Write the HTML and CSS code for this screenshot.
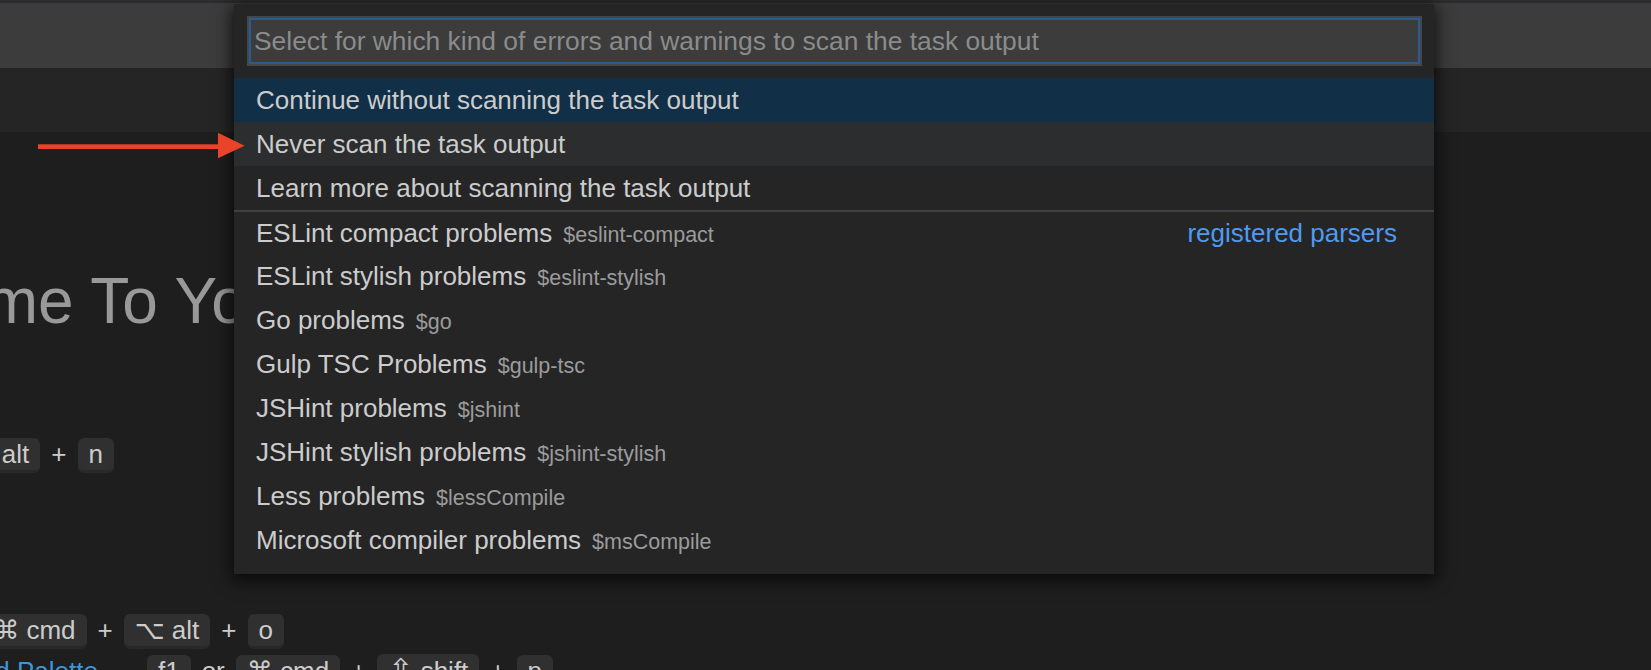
FILE: index.html
```html
<!DOCTYPE html>
<html>
<head>
<meta charset="utf-8">
<title>Quick Pick</title>
<link rel="stylesheet" href="styles.css">
</head>
<body>
<div class="app">
  <div class="topline"></div>
  <div class="titlebar"></div>
  <div class="tabbar"></div>
  <main class="editor">
    <h1 class="welcome">Welcome To Your Project</h1>
    <div class="keys row1">
      <span class="key">⌘ cmd</span><span class="plus">+</span><span class="key">⌥ alt</span><span class="plus">+</span><span class="key">n</span>
    </div>
    <div class="keys row2">
      <span class="key">⌘ cmd</span><span class="plus">+</span><span class="key">⌥ alt</span><span class="plus">+</span><span class="key">o</span>
    </div>
    <div class="keys row3">
      <span class="link">Command Palette</span><span class="key">f1</span><span class="plus">or</span><span class="key">⌘ cmd</span><span class="plus">+</span><span class="key"><span class="glyph">⇧</span> shift</span><span class="plus">+</span><span class="key">p</span>
    </div>
  </main>

  <svg class="arrow" width="207" height="27" viewBox="0 0 207 27">
    <rect x="0" y="12.3" width="184" height="4.7" fill="#e9442a"/>
    <polygon points="180,0.7 206.5,13.8 180,26.3" fill="#e9442a"/>
  </svg>

  <div class="quickpick">
    <div class="qp-input-wrap">
      <div class="qp-input"><span class="placeholder">Select for which kind of errors and warnings to scan the task output</span></div>
    </div>
    <div class="qp-list">
      <div class="qp-row selected"><span class="label">Continue without scanning the task output</span></div>
      <div class="qp-row hover"><span class="label">Never scan the task output</span></div>
      <div class="qp-row"><span class="label">Learn more about scanning the task output</span></div>
      <div class="qp-row separator"><span class="label">ESLint compact problems</span><span class="desc">$eslint-compact</span><span class="group">registered parsers</span></div>
      <div class="qp-row"><span class="label">ESLint stylish problems</span><span class="desc">$eslint-stylish</span></div>
      <div class="qp-row"><span class="label">Go problems</span><span class="desc">$go</span></div>
      <div class="qp-row"><span class="label">Gulp TSC Problems</span><span class="desc">$gulp-tsc</span></div>
      <div class="qp-row"><span class="label">JSHint problems</span><span class="desc">$jshint</span></div>
      <div class="qp-row"><span class="label">JSHint stylish problems</span><span class="desc">$jshint-stylish</span></div>
      <div class="qp-row"><span class="label">Less problems</span><span class="desc">$lessCompile</span></div>
      <div class="qp-row"><span class="label">Microsoft compiler problems</span><span class="desc">$msCompile</span></div>
    </div>
  </div>
</div>
</body>
</html>
```

FILE: styles.css
```css
html, body {
  margin: 0;
  padding: 0;
}

body {
  width: 1651px;
  height: 670px;
  overflow: hidden;
  background: #1e1e1e;
  font-family: "Liberation Sans", "DejaVu Sans", sans-serif;
}

.app {
  position: relative;
  height: 670px;
  overflow: hidden;
}

.topline {
  height: 3px;
  background: #2c2c2e;
}

.titlebar {
  height: 65px;
  background: #3c3c3c;
}

.tabbar {
  height: 64px;
  background: #252526;
}

.editor {
  padding-top: 132px;
}

.welcome {
  margin: 0 0 0 -192px;
  font-size: 64px;
  line-height: 74px;
  font-weight: normal;
  color: #999999;
  white-space: nowrap;
}

.keys {
  display: flex;
  justify-content: flex-end;
  align-items: baseline;
  gap: 11px;
  font-size: 26px;
  color: #cccccc;
  white-space: nowrap;
}

.row1 {
  width: 114px;
  margin-top: 100px;
}

.row2 {
  width: 284px;
  margin-top: 141px;
}

.row3 {
  width: 553px;
  margin-top: 5px;
}

.key {
  flex: none;
  box-sizing: border-box;
  height: 35px;
  padding: 0 11px;
  line-height: 32px;
  background: #303030;
  border-bottom: 3px solid #282828;
  border-radius: 6px;
}

.glyph {
  font-size: 30px;
}

.plus {
  flex: none;
}

.link {
  flex: none;
  color: #3c96d8;
  margin-right: 38px;
}

.arrow {
  position: absolute;
  left: 38px;
  top: 132px;
  z-index: 3;
}

.quickpick {
  position: absolute;
  left: 234px;
  top: 4px;
  width: 1200px;
  padding: 12px 0;
  background: #252526;
  box-shadow: 0 4px 16px 2px rgba(0, 0, 0, 0.75);
  font-size: 26px;
  color: #cccccc;
  z-index: 2;
}

.qp-input-wrap {
  padding: 0 12px 0 13px;
}

.qp-input {
  box-sizing: border-box;
  height: 50px;
  display: flex;
  align-items: center;
  padding-left: 5px;
  background: #3c3c3c;
  border: 2px solid #464646;
  box-shadow: inset 0 0 0 2px #2a5d8f;
  color: #8b8b8b;
  font-size: 26.4px;
  white-space: nowrap;
}

.qp-list {
  margin-top: 12px;
}

.qp-row {
  box-sizing: border-box;
  height: 44px;
  line-height: 44px;
  padding: 0 37px 0 22px;
  display: flex;
  align-items: baseline;
  white-space: nowrap;
}

.qp-row.selected {
  background: #112f47;
}

.qp-row.hover {
  background: #2b2d2e;
}

.qp-row.separator {
  border-top: 2px solid #404040;
  line-height: 42px;
}

.desc {
  margin-left: 11px;
  font-size: 21.5px;
  color: #9b9b9b;
}

.group {
  margin-left: auto;
  color: #4d9bf0;
}
```
